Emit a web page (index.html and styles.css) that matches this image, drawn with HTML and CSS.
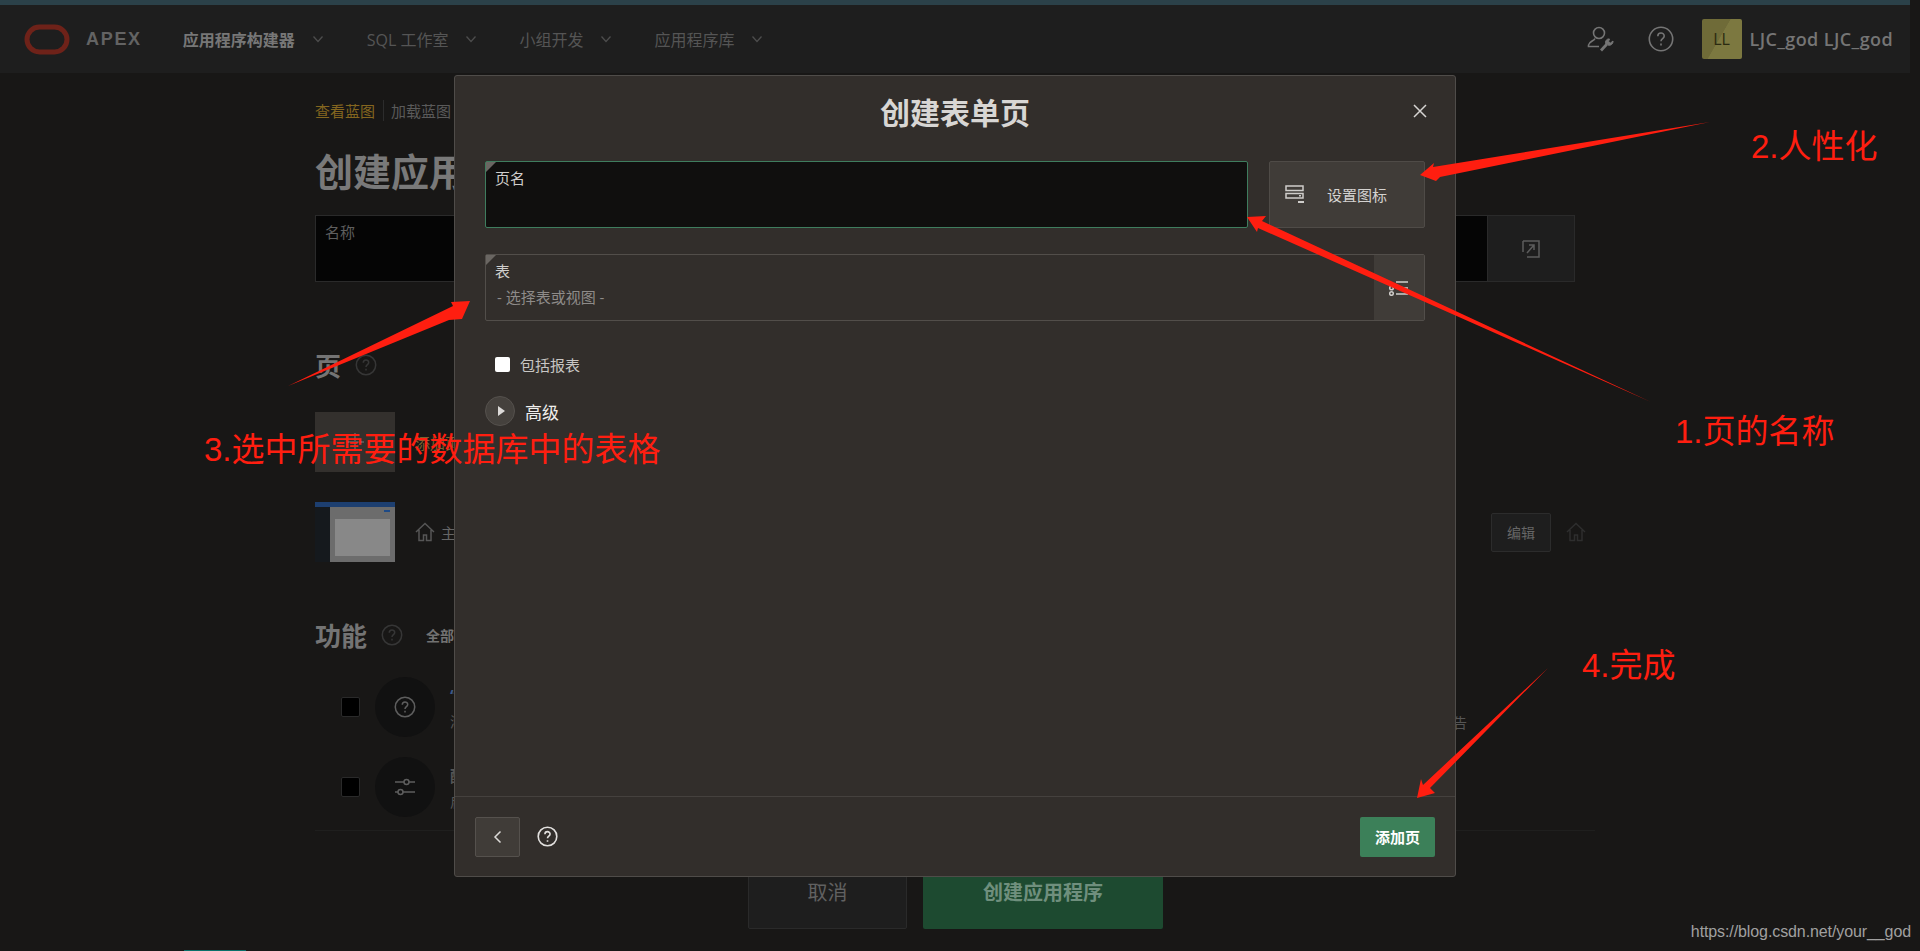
FILE: index.html
```html
<!DOCTYPE html>
<html lang="zh-CN">
<head>
    <meta charset="UTF-8">
    <title>创建应用程序</title>
    <link rel="stylesheet" href="styles.css">
</head>
<body>
<div class="topline"></div>
<header class="topbar">
    <svg class="logo" width="46" height="31" viewBox="0 0 46 31"><rect x="3" y="3" width="40" height="25" rx="12.5" fill="none" stroke="#6e2219" stroke-width="5"/></svg>
    <span class="brand">APEX</span>
    <nav class="nav">
        <a class="nav-item active">应用程序构建器<svg class="chev" width="12" height="8" viewBox="0 0 12 8"><path d="M1.5 1.5 6 6.5l4.500-5" fill="none" stroke="#4d4d4d" stroke-width="1.300"/></svg></a>
        <a class="nav-item">SQL 工作室<svg class="chev" width="12" height="8" viewBox="0 0 12 8"><path d="M1.5 1.5 6 6.5l4.500-5" fill="none" stroke="#4d4d4d" stroke-width="1.300"/></svg></a>
        <a class="nav-item">小组开发<svg class="chev" width="12" height="8" viewBox="0 0 12 8"><path d="M1.5 1.5 6 6.5l4.500-5" fill="none" stroke="#4d4d4d" stroke-width="1.300"/></svg></a>
        <a class="nav-item">应用程序库<svg class="chev" width="12" height="8" viewBox="0 0 12 8"><path d="M1.5 1.5 6 6.5l4.500-5" fill="none" stroke="#4d4d4d" stroke-width="1.300"/></svg></a>
    </nav>
    <div class="top-right">
        <svg width="28" height="26" viewBox="0 0 28 26" fill="none" stroke="#757575" stroke-width="1.600"><circle cx="12" cy="7" r="5.500"/><path d="M8 12.500C7 15 2 15.500 1.500 19v1.500H12"/><path d="M14 24.500l6-6.500" stroke-width="2.800"/><path d="M19 18c-1.500-3 1-5.500 3.500-5l-1 2.500 2 1.500 2.500-2c.3 3-2.500 5-5 4" fill="#757575" stroke-width="1"/></svg>
        <svg class="top-help" width="26" height="26" viewBox="0 0 26 26" fill="none" stroke="#757575" stroke-width="1.600"><circle cx="13" cy="13" r="11.700"/><path d="M9.800 10.200c0-4.200 6.400-4.200 6.400-.2 0 2.600-3.200 2.600-3.200 5.300"/><path d="M13 17.500v2"/></svg>
        <div class="avatar">LL</div>
        <span class="user-name">LJC_god LJC_god</span>
    </div>
</header>

<main class="page">
    <div class="crumbs"><a class="crumb-on">查看蓝图</a><a class="crumb">加载蓝图</a></div>
    <h1 class="page-title">创建应用程序</h1>
    <div class="name-row">
        <div class="name-field"><label>名称</label></div>
        <div class="name-btn">
            <svg width="20" height="20" viewBox="0 0 20 20" fill="none" stroke="#5c5c5c" stroke-width="1.500"><path d="M2 2h16v16H6"/><path d="M2 2v11"/><path d="M6 14l7-8M8 6h5v5"/></svg>
        </div>
    </div>

    <div class="sec-head">
        <h2>页</h2>
        <svg width="22" height="22" viewBox="0 0 26 26" fill="none" stroke="#363636" stroke-width="1.800"><circle cx="13" cy="13" r="11.500"/><path d="M9.800 10.200c0-4.200 6.400-4.200 6.400-.2 0 2.600-3.200 2.600-3.200 5.300M13 17.500v2"/></svg>
    </div>
    <div class="page-row add-row">
        <div class="add-tile"><span class="plus"></span></div>
        <a class="add-link">添加页</a>
    </div>
    <div class="page-row thumb-row">
        <div class="thumb">
            <div class="thumb-top"></div>
            <div class="thumb-main">
                <div class="thumb-side"></div>
                <div class="thumb-body"><div class="thumb-btn"></div><div class="thumb-card"></div></div>
            </div>
        </div>
        <svg class="home" width="20" height="20" viewBox="0 0 20 20" fill="none" stroke="#565656" stroke-width="1.500"><path d="M1 10 10 1.500 19 10M4 8v10.500h4.500V13h3v5.500H16V8"/></svg>
        <span class="home-name">主页</span>
        <a class="edit-btn">编辑</a>
        <svg width="20" height="20" viewBox="0 0 20 20" fill="none" stroke="#2e2e2e" stroke-width="1.500"><path d="M1 10 10 1.500 19 10M4 8v10.500h4.500V13h3v5.500H16V8"/></svg>
    </div>

    <div class="sec-head feat-head">
        <h2>功能</h2>
        <svg width="22" height="22" viewBox="0 0 26 26" fill="none" stroke="#363636" stroke-width="1.800"><circle cx="13" cy="13" r="11.500"/><path d="M9.800 10.200c0-4.200 6.400-4.200 6.400-.2 0 2.600-3.200 2.600-3.200 5.300M13 17.500v2"/></svg>
        <a class="all-link">全部选中</a>
    </div>
    <div class="feat-row first">
        <span class="feat-check"></span>
        <span class="feat-icon">
            <svg width="22" height="22" viewBox="0 0 26 26" fill="none" stroke="#5e5e5e" stroke-width="1.800"><circle cx="13" cy="13" r="11.500"/><path d="M9.800 10.200c0-4.200 6.400-4.200 6.400-.2 0 2.600-3.200 2.600-3.200 5.300M13 17.500v2"/></svg>
        </span>
        <div class="feat-text"><b class="feat-blue">“关于”页</b><span>添加关于页</span></div>
        <span class="feat-note">活动报告</span>
    </div>
    <div class="feat-row">
        <span class="feat-check"></span>
        <span class="feat-icon">
            <svg width="22" height="20" viewBox="0 0 22 20" fill="none" stroke="#5e5e5e" stroke-width="1.500"><path d="M1 5h9M15 5h6M1 15h3M9 15h12"/><circle cx="12.500" cy="5" r="2.500"/><circle cx="6.500" cy="15" r="2.500"/></svg>
        </span>
        <div class="feat-text"><b>配置选项</b><span>启用配置选项</span></div>
    </div>
    <div class="rule"></div>
    <div class="bottom-btns">
        <a class="btn-cancel">取消</a>
        <a class="btn-create">创建应用程序</a>
    </div>
</main>
<div class="sliver"></div>

<section class="dialog">
    <div class="dlg-head">
        <h2 class="dlg-title">创建表单页</h2>
        <svg class="dlg-close" width="14" height="14" viewBox="0 0 14 14" stroke="#d6d4d2" stroke-width="1.500"><path d="M1 1l12 12M13 1 1 13"/></svg>
    </div>
    <div class="dlg-body">
        <div class="field-row">
            <div class="field field-focus"><label>页名</label></div>
            <button class="icon-btn">
                <svg width="20" height="19" viewBox="0 0 20 19" fill="none" stroke="#cfcdca" stroke-width="1.500"><rect x="1" y="1" width="17" height="4.500"/><rect x="1" y="8.500" width="17" height="4.500"/><path d="M14 10.700h2" /><rect x="13" y="16" width="6" height="2" fill="#cfcdca" stroke="none"/></svg>
                <span>设置图标</span>
            </button>
        </div>
        <div class="field table-field">
            <div class="table-text"><label>表</label><span class="select-val">- 选择表或视图 -</span></div>
            <div class="table-btn">
                <svg width="20" height="16" viewBox="0 0 20 16" fill="none" stroke="#d0cecb" stroke-width="1.500"><path d="M7 2h12M7 8h12M7 14h12"/><circle cx="2.500" cy="8" r="1.800"/><circle cx="2.500" cy="13.500" r="1.800"/></svg>
            </div>
        </div>
        <label class="check-row"><span class="check-box"></span>包括报表</label>
        <div class="adv-row">
            <span class="adv-circle"><span class="adv-tri"></span></span>
            <span class="adv-text">高级</span>
        </div>
    </div>
    <div class="dlg-foot">
        <button class="back-btn"><svg width="10" height="14" viewBox="0 0 10 14" fill="none" stroke="#dcdad8" stroke-width="1.500"><path d="M7.500 1.500 2 7l5.500 5.500"/></svg></button>
        <svg class="foot-help" width="21" height="21" viewBox="0 0 26 26" fill="none" stroke="#e2e0de" stroke-width="2"><circle cx="13" cy="13" r="11.500"/><path d="M9.800 10.200c0-4.200 6.400-4.200 6.400-.2 0 2.600-3.200 2.600-3.200 5.300M13 17.500v2"/></svg>
        <button class="add-btn">添加页</button>
    </div>
</section>

<!-- 红色标注 -->
<svg class="arrows" width="1920" height="951" viewBox="0 0 1920 951" fill="#ff1e10">
    <polygon points="1420,175 1434,163 1433,167 1710,122 1440,177 1436,181"/>
    <polygon points="1247,217 1266,216 1262,221 1651,402 1258,228 1257,232"/>
    <polygon points="470,301 451,302 453,306 288,386 449,320 462,319"/>
    <polygon points="1417,798 1421,779 1423,785 1548,668 1430,788 1435,793"/>
</svg>
<span class="note note-1">1.页的名称</span>
<span class="note note-2">2.人性化</span>
<span class="note note-3">3.选中所需要的数据库中的表格</span>
<span class="note note-4">4.完成</span>
<span class="watermark">https://blog.csdn.net/your__god</span>
</body>
</html>
```

FILE: styles.css
```css
* {
    box-sizing: border-box;
}
html, body {
    height: 951px;
    overflow: hidden;
}
body {
    margin: 0;
    background-color: #181716;
    color: #666;
    font-family: "Open Sans", "Noto Sans CJK SC", sans-serif;
    font-size: 15px;
    position: relative;
}
h1, h2 {
    margin: 0;
}

/* top bar */
.topline {
    width: 1910px;
    height: 5px;
    background-color: #2b4149;
}
.topbar {
    width: 1910px;
    height: 68px;
    background-color: #1e1e1e;
    display: flex;
    align-items: center;
    padding-left: 24px;
}
.brand {
    margin-left: 16px;
    font-family: "Liberation Sans", sans-serif;
    font-size: 18px;
    font-weight: 700;
    letter-spacing: 1.7px;
    color: #636363;
}
.nav {
    display: flex;
    margin-left: 41px;
    gap: 43px;
}
.nav-item {
    display: flex;
    align-items: center;
    gap: 16px;
    font-size: 16px;
    color: #555;
}
.nav-item.active {
    gap: 17px;
    color: #777;
    font-weight: 700;
}
.top-right {
    margin-left: auto;
    display: flex;
    align-items: center;
    padding-right: 17px;
}
.top-help {
    margin-left: 33px;
}
.avatar {
    width: 40px;
    height: 40px;
    margin-left: 28px;
    border-radius: 2px;
    background: linear-gradient(120deg, #6f6b38 45%, #7c7840 46%);
    color: #2b2a10;
    font-size: 16px;
    display: flex;
    align-items: center;
    justify-content: center;
}
.user-name {
    margin-left: 8px;
    font-size: 18px;
    font-weight: 600;
    letter-spacing: .4px;
    color: #757575;
}

/* page behind the dialog */
.page {
    width: 1280px;
    margin-left: 315px;
}
.crumbs {
    margin-top: 28px;
    height: 18px;
    display: flex;
    align-items: center;
}
.crumb-on {
    color: #84661f;
    padding-right: 8px;
    border-right: 1px solid #2c2c2c;
}
.crumb {
    padding-left: 7px;
    color: #5a5a5a;
}
.page-title {
    margin-top: 30px;
    height: 44px;
    font-size: 38px;
    line-height: 44px;
    color: #797979;
}
.name-row {
    margin-top: 22px;
    width: 1260px;
    height: 67px;
    display: flex;
}
.name-field {
    flex: 1;
    padding: 5px 9px;
    background-color: #050505;
    border: 1px solid #2a2a2a;
    font-size: 15px;
    color: #5e5e5e;
}
.name-btn {
    width: 87px;
    background-color: #1e1e1e;
    border: 1px solid #2a2a2a;
    border-left: 0;
    display: flex;
    align-items: center;
    justify-content: center;
}
.sec-head {
    margin-top: 65px;
    height: 36px;
    display: flex;
    align-items: center;
    gap: 14px;
}
.sec-head h2 {
    font-size: 26px;
    color: #747474;
}
.page-row {
    display: flex;
    align-items: center;
    height: 60px;
    width: 1271px;
}
.add-row {
    margin-top: 29px;
}
.add-tile {
    width: 80px;
    height: 60px;
    background-color: #33302d;
    display: flex;
    align-items: center;
    justify-content: center;
}
.plus {
    width: 18px;
    height: 18px;
    background:
        linear-gradient(#555, #555) center / 100% 2px no-repeat,
        linear-gradient(#555, #555) center / 2px 100% no-repeat;
}
.add-link {
    margin-left: 20px;
    color: #7a6230;
}
.thumb-row {
    margin-top: 30px;
}
.thumb {
    width: 80px;
    height: 60px;
    flex-shrink: 0;
}
.thumb-top {
    height: 5px;
    background-color: #1d3f70;
}
.thumb-main {
    display: flex;
    height: 55px;
}
.thumb-side {
    width: 15px;
    background-color: #15191d;
}
.thumb-body {
    flex: 1;
    background-color: #6c6c6c;
    padding: 3px 5px 5px;
}
.thumb-btn {
    width: 6px;
    height: 2px;
    margin-left: auto;
    background-color: #1e4a86;
}
.thumb-card {
    height: 37px;
    margin-top: 7px;
    background-color: #888;
}
.home {
    margin-left: 20px;
}
.home-name {
    margin-left: 6px;
    color: #666;
    font-size: 15px;
    white-space: nowrap;
}
.edit-btn {
    margin-left: auto;
    margin-right: 15px;
    width: 60px;
    height: 39px;
    background-color: #1e1e1e;
    border: 1px solid #2c2c2c;
    border-radius: 2px;
    color: #666;
    font-size: 14px;
    display: flex;
    align-items: center;
    justify-content: center;
}
.feat-head {
    margin-top: 55px;
}
.all-link {
    margin-left: 9px;
    font-size: 14px;
    font-weight: 700;
    color: #727272;
}
.feat-row {
    margin-top: 20px;
    width: 1152px;
    height: 60px;
    padding-left: 26px;
    display: flex;
    align-items: center;
}
.feat-row.first {
    margin-top: 24px;
}
.feat-check {
    width: 19px;
    height: 20px;
    background-color: #000;
    border: 1px solid #2a2a2a;
    border-radius: 2px;
}
.feat-icon {
    width: 60px;
    height: 60px;
    margin-left: 15px;
    border-radius: 50%;
    background-color: #111;
    display: flex;
    align-items: center;
    justify-content: center;
}
.feat-text {
    margin-left: 15px;
    display: flex;
    flex-direction: column;
    gap: 4px;
    font-size: 14px;
    color: #555;
}
.feat-text b {
    font-size: 16px;
}
.feat-blue {
    color: #3c5888;
}
.feat-note {
    margin-left: auto;
    margin-top: 30px;
    font-size: 14px;
    color: #555;
}
.rule {
    margin-top: 13px;
    height: 1px;
    background-color: #1f1f1e;
}
.bottom-btns {
    margin-top: 22px;
    margin-left: 433px;
    display: flex;
    gap: 16px;
    height: 76px;
}
.btn-cancel, .btn-create {
    height: 76px;
    font-size: 20px;
    display: flex;
    align-items: center;
    justify-content: center;
    border-radius: 2px;
}
.btn-cancel {
    width: 159px;
    background-color: #1e1e1e;
    border: 1px solid #2a2a2a;
    color: #616161;
}
.btn-create {
    width: 240px;
    background-color: #1d4a30;
    color: #6f8f7d;
    font-weight: 700;
}
.sliver {
    position: absolute;
    left: 184px;
    bottom: 0;
    width: 62px;
    height: 1px;
    background-color: #0a6f6a;
}

/* dialog */
.dialog {
    position: absolute;
    left: 454px;
    top: 75px;
    width: 1002px;
    height: 802px;
    background-color: #322e2b;
    border: 1px solid #4f4c49;
    border-radius: 3px;
    display: flex;
    flex-direction: column;
    color: #d0cecc;
}
.dlg-head {
    height: 70px;
    margin-bottom: 15px;
    padding: 0 28px;
    display: grid;
    grid-template-columns: 1fr auto 1fr;
    align-items: center;
}
.dlg-title {
    grid-column: 2;
    font-size: 30px;
    color: #d8d6d4;
}
.dlg-close {
    grid-column: 3;
    justify-self: end;
}
.dlg-body {
    flex: 1;
    padding: 0 30px;
}
.field-row {
    display: flex;
    gap: 21px;
    height: 67px;
}
.field {
    position: relative;
    border: 1px solid #524e4a;
    border-radius: 2px;
    font-size: 15px;
}
.field::before {
    content: "";
    position: absolute;
    left: 0;
    top: 0;
    border-top: 10px solid #6a6662;
    border-right: 10px solid transparent;
}
.field-focus {
    flex: 1;
    padding: 5px 9px;
    background-color: #100f0e;
    border-color: #3f7d5e;
}
.icon-btn {
    width: 156px;
    padding: 0 0 0 15px;
    background-color: #403c38;
    border: 1px solid #4f4b47;
    border-radius: 2px;
    display: flex;
    align-items: center;
    font-family: inherit;
    font-size: 15px;
    color: #d4d2d0;
}
.icon-btn span {
    margin-left: 22px;
}
.table-field {
    margin-top: 26px;
    height: 67px;
    display: flex;
}
.table-text {
    flex: 1;
    padding: 5px 9px;
    display: flex;
    flex-direction: column;
}
.select-val {
    margin-top: 5px;
    padding-left: 2px;
    color: #8e8b89;
}
.table-btn {
    width: 50px;
    background-color: #403c38;
    display: flex;
    align-items: center;
    justify-content: center;
}
.check-row {
    margin-top: 35px;
    padding-left: 10px;
    height: 16px;
    display: flex;
    align-items: center;
    font-size: 15px;
    color: #c8c6c4;
}
.check-box {
    width: 15px;
    height: 15px;
    margin-right: 10px;
    background-color: #fff;
    border-radius: 2px;
}
.adv-row {
    margin-top: 24px;
    display: flex;
    align-items: center;
}
.adv-circle {
    width: 30px;
    height: 30px;
    border-radius: 50%;
    background-color: #45413d;
    border: 1px solid #55514d;
    display: flex;
    align-items: center;
    justify-content: center;
}
.adv-tri {
    margin-left: 2px;
    border-left: 7px solid #dcdad8;
    border-top: 5px solid transparent;
    border-bottom: 5px solid transparent;
}
.adv-text {
    margin-left: 10px;
    font-size: 17px;
    font-weight: 400;
    color: #f0eeec;
}
.dlg-foot {
    height: 80px;
    padding: 0 20px;
    border-top: 1px solid #45413e;
    display: flex;
    align-items: center;
}
.back-btn {
    width: 45px;
    height: 40px;
    background-color: #403c38;
    border: 1px solid #55514d;
    border-radius: 2px;
    display: flex;
    align-items: center;
    justify-content: center;
}
.foot-help {
    margin-left: 17px;
}
.add-btn {
    margin-left: auto;
    width: 75px;
    height: 40px;
    background-color: #3c8059;
    border: none;
    border-radius: 2px;
    color: #fff;
    font-family: inherit;
    font-size: 15px;
    font-weight: 700;
}

/* annotations */
.arrows {
    position: absolute;
    left: 0;
    top: 0;
}
.note {
    position: absolute;
    font-family: "Liberation Sans", "Noto Sans CJK SC", sans-serif;
    font-size: 33px;
    line-height: 40px;
    color: #ff1e10;
    white-space: nowrap;
}
.note-1 {
    left: 1675px;
    top: 412px;
}
.note-2 {
    left: 1751px;
    top: 127px;
}
.note-3 {
    left: 204px;
    top: 430px;
}
.note-4 {
    left: 1582px;
    top: 646px;
}
.watermark {
    position: absolute;
    right: 9px;
    top: 922px;
    font-family: "Liberation Sans", sans-serif;
    font-size: 16px;
    letter-spacing: -.1px;
    line-height: 20px;
    color: #a0a0a0;
}
```
